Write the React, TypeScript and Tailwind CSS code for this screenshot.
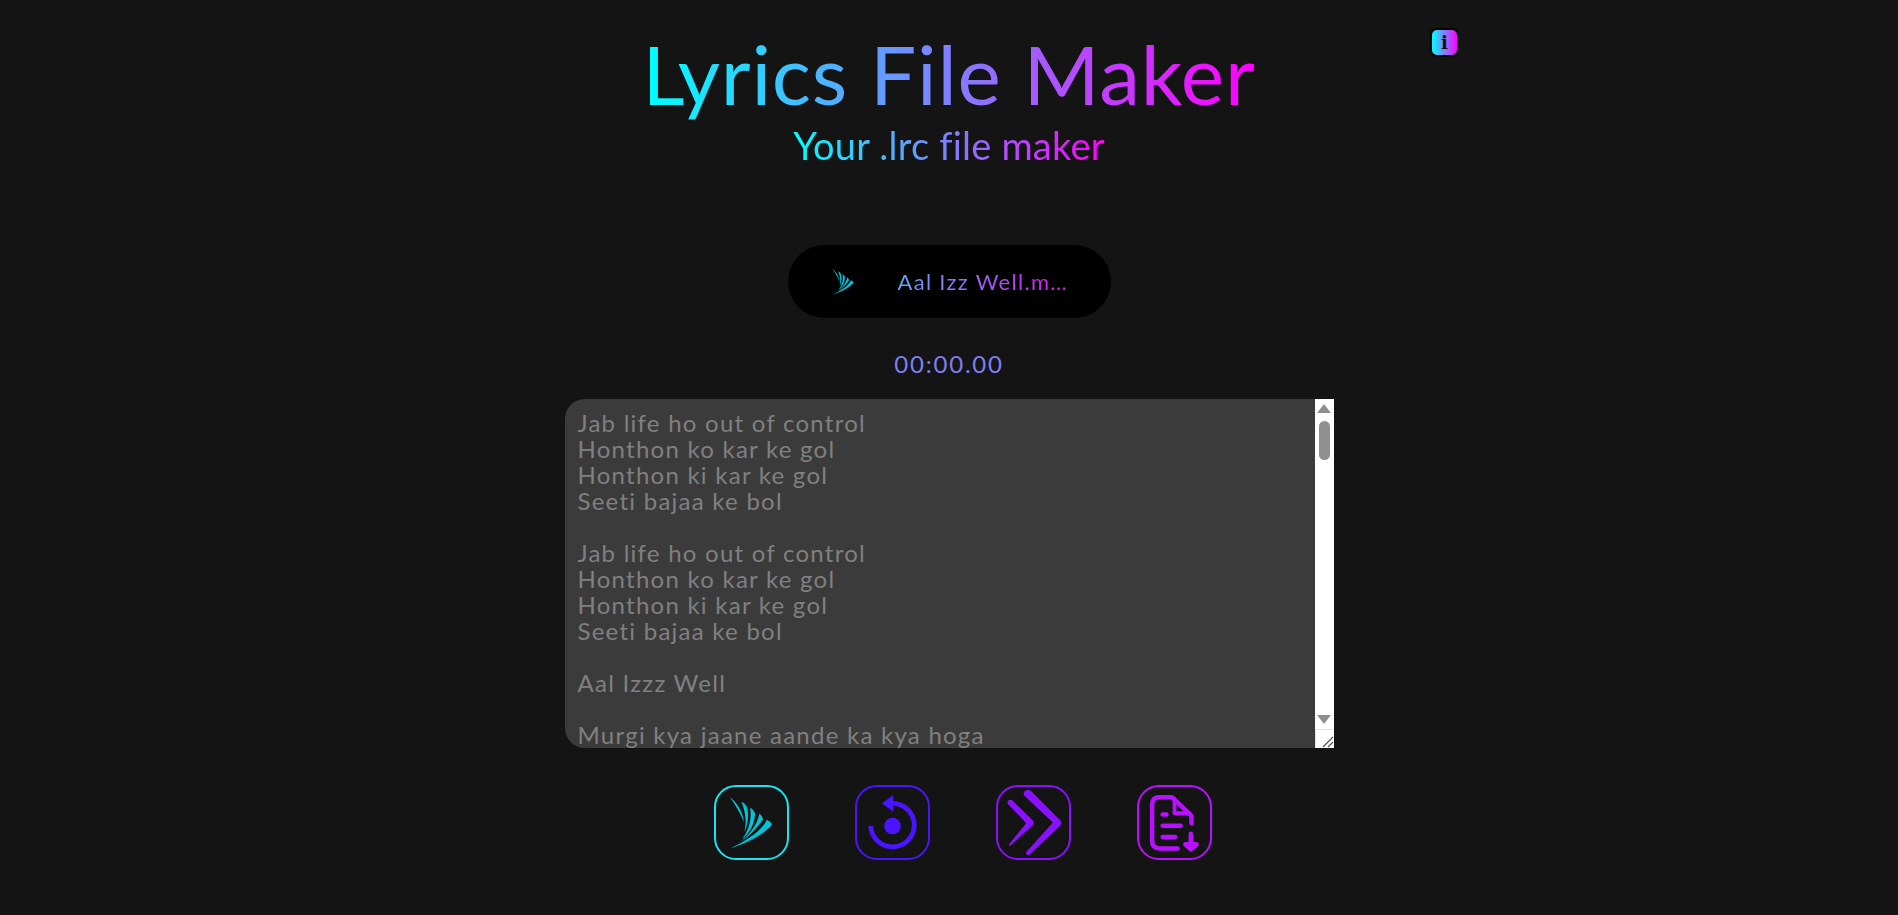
const lyrics = `Jab life ho out of control
Honthon ko kar ke gol
Honthon ki kar ke gol
Seeti bajaa ke bol

Jab life ho out of control
Honthon ko kar ke gol
Honthon ki kar ke gol
Seeti bajaa ke bol

Aal Izzz Well

Murgi kya jaane aande ka kya hoga`;

function FanLogo({ className }: { className: string }) {
  return (
    <svg viewBox="92 85 127 156" className={className} fill="#00c4da">
      <path d="M92 240 C140 224 185 205 219 168 C218 162 210 156 203 153 C190 185 140 218 92 240Z" />
      <path d="M118 224 C150 205 172 180 192 152 C190 145 186 138 181 134 C174 170 150 200 118 224Z" />
      <path d="M128 212 C150 195 165 170 168 135 C164 126 160 120 153 117 C158 150 150 185 128 212Z" />
      <path d="M136 190 C148 165 150 130 142 112 C138 106 133 102 126 99 C140 130 142 160 136 190Z" />
      <path d="M134 160 C132 130 112 100 92 85 C110 110 124 135 134 160Z" />
    </svg>
  );
}

function RestartIcon() {
  return (
    <svg viewBox="467 46 222 222" className="size-full" fill="#4a14ff">
      <circle cx="578" cy="168" r="26" />
      <path d="M510 168 A68 68 0 1 0 578 97" fill="none" stroke="#4a14ff" strokeWidth="15" />
      <path d="M580 71 L545 97 L580 123Z" />
    </svg>
  );
}

function ChevronsIcon() {
  return (
    <svg viewBox="47 46 226 224" className="size-full" fill="#8a10ff">
      <path d="M78 98 C74 88 86 82 93 88 L158 152 C162 156 162 162 158 166 L85 233 L81 229 L137 160Z" />
      <path d="M130 72 C124 58 142 50 152 58 L244 150 C249 155 249 162 244 168 L146 262 C140 264 134 258 137 252 L222 158Z" />
    </svg>
  );
}

function FileIcon() {
  return (
    <svg viewBox="472 46 222 222" className="size-full" fill="none" stroke="#b910ff" strokeWidth="14" strokeLinecap="round" strokeLinejoin="round">
      <path d="M593 238 H536 Q513 238 513 215 V101 Q513 78 536 78 H575 L636 136 V159" />
      <path d="M583 84 V128 H630" strokeWidth="12" />
      <path d="M546 132 H558 M546 167 H602 M546 202 H585" />
      <path d="M634 192 V232" />
      <path d="M617 225 L634 241 L652 225 Z" fill="#b910ff" />
    </svg>
  );
}

const actions = [
  { border: "border-[#19e6f0]", icon: <FanLogo className="h-[52px] w-[42px]" /> },
  { border: "border-[#4a14ff]", icon: <RestartIcon /> },
  { border: "border-[#8a10ff]", icon: <ChevronsIcon /> },
  { border: "border-[#b910ff]", icon: <FileIcon /> },
];

export default function App() {
  return (
    <div className="flex min-h-[915px] flex-col items-center bg-[#141414] font-['Lato',sans-serif]">
      <header className="relative flex w-[1016px] flex-col items-center pt-[23px]">
        <h1 className="bg-linear-to-r/srgb from-[#0ff] to-[#f0f] bg-clip-text text-[82px] leading-[100px] font-normal tracking-[0.8px] text-transparent">
          Lyrics File Maker
        </h1>
        <p className="mt-[-2px] bg-linear-to-r/srgb from-[#0ff] to-[#f0f] bg-clip-text text-[38px] leading-[48px] tracking-[0.2px] text-transparent">
          Your .lrc file maker
        </p>
        <button className="absolute top-[28px] right-[-2px] flex size-[29px] items-center justify-center rounded-[7px] border-2 border-black bg-linear-to-r/srgb from-[#0ff] to-[#f0f] font-['DejaVu_Serif',serif] text-[18px] leading-none font-bold text-[#111]">
          i
        </button>
      </header>

      <div className="mt-[76px] flex h-[73px] w-[323px] items-center rounded-full bg-black pl-[44px]">
        <FanLogo className="h-[26px] w-[22px]" />
        <span className="ml-[44px] w-[171px] truncate bg-linear-to-r/srgb from-[#5fa8f5] to-[#e010f0] bg-clip-text text-[22px] tracking-[1.3px] text-transparent">
          Aal Izz Well.m...
        </span>
      </div>

      <div className="mt-[31px] text-[24px] leading-[30px] tracking-[1.8px] text-[#7f7ff0]">00:00.00</div>

      <div className="mt-[20px] flex h-[349px] w-[769px]">
        <textarea
          readOnly
          defaultValue={lyrics}
          className="flex-1 resize-none overflow-hidden rounded-l-[20px] bg-[#3b3b3b] pt-[11px] pl-[13px] text-[24px] leading-[26px] tracking-[1.25px] text-[#808080] outline-none"
        />
        <div className="flex w-[19px] flex-col items-center bg-white">
          <div className="mt-[5px] size-0 border-x-[7px] border-b-[9px] border-x-transparent border-b-[#8f8f8f]" />
          <div className="mt-[8px] h-[39px] w-[11px] rounded-full bg-[#8f8f8f]" />
          <div className="mt-auto mb-[5px] size-0 border-x-[7px] border-t-[9px] border-x-transparent border-t-[#8f8f8f]" />
          <div className="flex h-[19px] w-full items-end justify-end border-t border-l border-[#e4e4e4]">
            <svg viewBox="0 0 12 12" className="size-[12px]" stroke="#555" strokeWidth="1.2">
              <path d="M1 11 L11 1 M6 11 L11 6" />
            </svg>
          </div>
        </div>
      </div>

      <div className="mt-[37px] ml-[27px] flex gap-[66px]">
        {actions.map((action, i) => (
          <button
            key={i}
            className={`flex size-[75px] items-center justify-center rounded-[22px] border-2 ${action.border}`}
          >
            {action.icon}
          </button>
        ))}
      </div>
    </div>
  );
}
